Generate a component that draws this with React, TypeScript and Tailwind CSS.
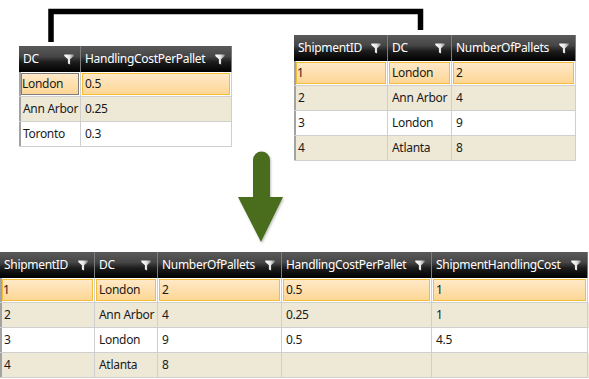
import React from 'react';

type Column = { title: string; width: string };

interface GridProps {
    columns: Column[];
    rows: string[][];
    focusFirst?: boolean;
}

function FilterIcon() {
    return (
        <svg width="10" height="11" viewBox="0 0 10 11" className="shrink-0">
            <defs>
                <linearGradient id="fg" x1="0" y1="0" x2="1" y2="0">
                    <stop offset="0" stopColor="#ffffff" />
                    <stop offset="0.55" stopColor="#e6e6e6" />
                    <stop offset="1" stopColor="#8a8a8a" />
                </linearGradient>
            </defs>
            <path d="M0.3 0.5 H9.7 V2 L6.1 5.3 V10.6 L3.9 9.4 V5.3 L0.3 2 Z" fill="url(#fg)" />
        </svg>
    );
}

function DataGrid({ columns, rows, focusFirst }: GridProps) {
    return (
        <div className="flex flex-col text-[12px] font-['Noto_Sans',sans-serif] whitespace-nowrap">
            {/* header */}
            <div className="flex h-[26px]">
                {columns.map((col) => (
                    <div
                        key={col.title}
                        className={`${col.width} flex items-center justify-between pl-[4px] pr-[6px] text-white border-r border-r-[#7c7c7c] bg-[linear-gradient(to_bottom,#5a5a5a_0%,#464646_40%,#1c1c1c_62%,#000_100%)]`}
                    >
                        <span className="leading-none tracking-[-0.3px]">{col.title}</span>
                        <FilterIcon />
                    </div>
                ))}
            </div>
            {/* rows */}
            {rows.map((row, r) => {
                const selected = r === 0;
                const rowBg = r % 2 === 1 ? 'bg-[#eee8d7]' : 'bg-white';
                return (
                    <div key={r} className={`flex h-[25px] border-l-2 border-l-[#a3a3a3] ${rowBg}`}>
                        {row.map((cell, c) => (
                            <div
                                key={c}
                                className={`${columns[c].width} ${c === 0 ? '-ml-[2px] pl-[2px]' : ''} overflow-hidden border-r border-b border-[#cfcfcf] ${selected ? 'p-px' : ''}`}
                            >
                                {selected ? (
                                    <div
                                        className={`h-full flex items-center border bg-[linear-gradient(to_bottom,#ffe9c8,#fdd695)] ${c === 0 ? 'pl-0' : 'pl-[2px]'} ${focusFirst && c === 0 ? 'border-[#7d7d7d]' : 'border-[#f4bd38]'}`}
                                    >
                                        <span className="text-[#1a1a1a] tracking-[-0.3px]">{cell}</span>
                                    </div>
                                ) : (
                                    <div className={`h-full flex items-center ${c === 0 ? 'pl-[2px]' : 'pl-[4px]'}`}>
                                        <span className="text-[#1a1a1a] tracking-[-0.3px]">{cell}</span>
                                    </div>
                                )}
                            </div>
                        ))}
                    </div>
                );
            })}
        </div>
    );
}

const costColumns: Column[] = [
    { title: 'DC', width: 'w-[62px]' },
    { title: 'HandlingCostPerPallet', width: 'w-[151px]' },
];

const shipColumns: Column[] = [
    { title: 'ShipmentID', width: 'w-[94px]' },
    { title: 'DC', width: 'w-[64px]' },
    { title: 'NumberOfPallets', width: 'w-[124px]' },
];

const joinColumns: Column[] = [
    { title: 'ShipmentID', width: 'w-[95px]' },
    { title: 'DC', width: 'w-[63px]' },
    { title: 'NumberOfPallets', width: 'w-[124px]' },
    { title: 'HandlingCostPerPallet', width: 'w-[150px]' },
    { title: 'ShipmentHandlingCost', width: 'w-[156px]' },
];

export default function App() {
    return (
        <div className="relative w-[589px] h-[379px] bg-white overflow-hidden">
            {/* top: source tables */}
            <div className="flex items-start h-[252px] pt-[35px]">
                <div className="ml-[19px] mt-[11px]">
                    <DataGrid
                        columns={costColumns}
                        rows={[
                            ['London', '0.5'],
                            ['Ann Arbor', '0.25'],
                            ['Toronto', '0.3'],
                        ]}
                        focusFirst
                    />
                </div>
                <div className="ml-[62px]">
                    <DataGrid
                        columns={shipColumns}
                        rows={[
                            ['1', 'London', '2'],
                            ['2', 'Ann Arbor', '4'],
                            ['3', 'London', '9'],
                            ['4', 'Atlanta', '8'],
                        ]}
                    />
                </div>
            </div>

            {/* bottom: joined table */}
            <DataGrid
                columns={joinColumns}
                rows={[
                    ['1', 'London', '2', '0.5', '1'],
                    ['2', 'Ann Arbor', '4', '0.25', '1'],
                    ['3', 'London', '9', '0.5', '4.5'],
                    ['4', 'Atlanta', '8', '', ''],
                ]}
            />

            {/* join bracket */}
            <svg className="absolute left-0 top-0" width="589" height="50" viewBox="0 0 589 50">
                <path d="M51 42 V11.5 H420.5 V30" fill="none" stroke="#000" strokeWidth="5.5" />
            </svg>

            {/* arrow */}
            <svg className="absolute left-[236px] top-[148px]" width="50" height="98" viewBox="0 0 50 98">
                <defs>
                    <filter id="sh" x="-20%" y="-20%" width="140%" height="140%">
                        <feDropShadow dx="1" dy="1.5" stdDeviation="1.2" floodColor="#000" floodOpacity="0.25" />
                    </filter>
                </defs>
                <path
                    d="M17 12 A8.5 8.5 0 0 1 34 12 V49 H47 L25 94 L2 49 H17 Z"
                    fill="#4a6d1e"
                    filter="url(#sh)"
                />
            </svg>
        </div>
    );
}
